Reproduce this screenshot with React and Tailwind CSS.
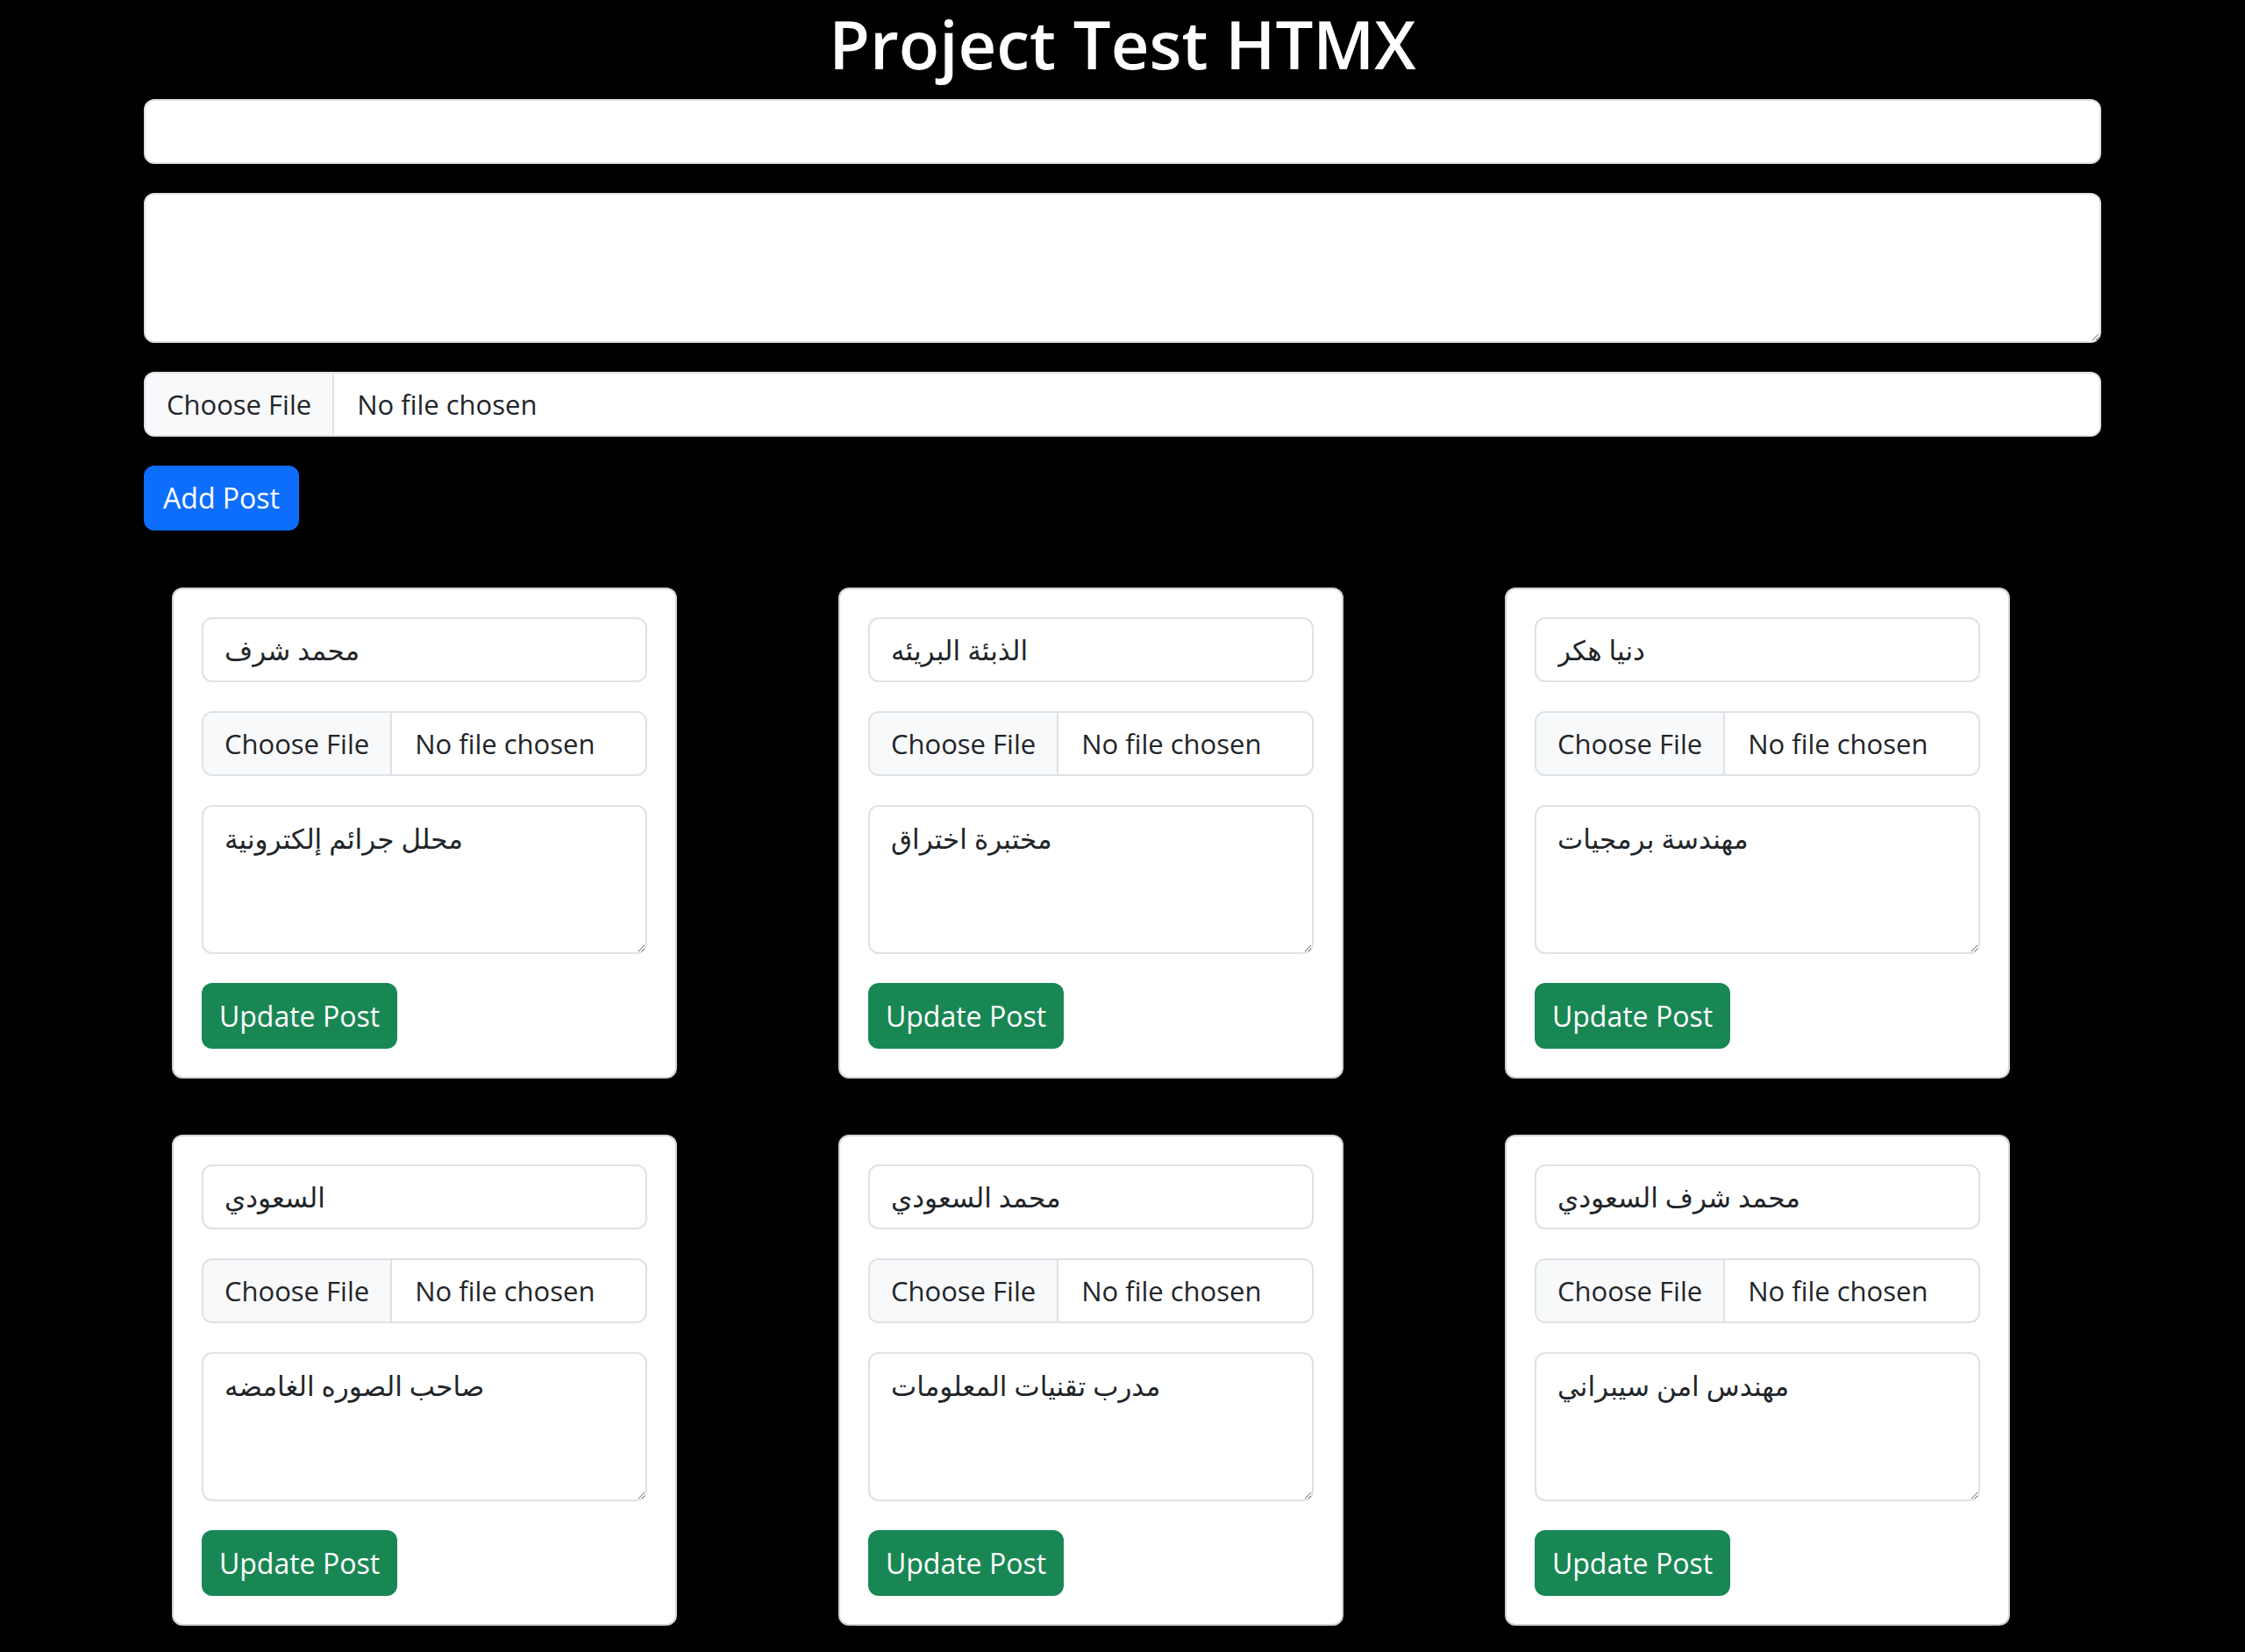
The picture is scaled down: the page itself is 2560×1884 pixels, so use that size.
import React from "react";

const posts = [
  { name: "محمد شرف", desc: "محلل جرائم إلكترونية" },
  { name: "الذبئة البريئه", desc: "مختبرة اختراق" },
  { name: "دنيا هكر", desc: "مهندسة برمجيات" },
  { name: "السعودي", desc: "صاحب الصوره الغامضه" },
  { name: "محمد السعودي", desc: "مدرب تقنيات المعلومات" },
  { name: "محمد شرف السعودي", desc: "مهندس امن سيبراني" },
];

function FileInput() {
  return (
    <div className="flex h-[74px] w-full items-stretch overflow-hidden rounded-[12px] border-2 border-[#dee2e6] bg-white text-[31px] text-[#212529]">
      <div className="flex items-center border-r-2 border-[#dee2e6] bg-[#f8f9fa] px-[24px]">
        Choose File
      </div>
      <div className="flex items-center pl-[26px]">No file chosen</div>
    </div>
  );
}

function Card({ name, desc }) {
  return (
    <div className="px-[24px]">
      <div className="m-[32px] flex w-[576px] flex-col gap-[33px] rounded-[12px] border-2 border-[#d2d2d2] bg-white p-[32px]">
        <input
          readOnly
          defaultValue={name}
          className="h-[74px] w-full rounded-[12px] border-2 border-[#dee2e6] bg-white px-[24px] text-[31px] text-[#212529] outline-none"
        />
        <FileInput />
        <textarea
          readOnly
          defaultValue={desc}
          className="block h-[170px] w-full resize-y rounded-[12px] border-2 border-[#dee2e6] bg-white px-[24px] py-[12px] text-[31px] leading-[48px] text-[#212529] outline-none"
        />
        <div>
          <button className="h-[75px] w-[223px] rounded-[12px] bg-[#198754] text-[32px] text-white">
            Update Post
          </button>
        </div>
      </div>
    </div>
  );
}

export default function App() {
  return (
    <div className="min-h-screen bg-black font-['Open_Sans','DejaVu_Sans',sans-serif]">
      <div className="mx-auto w-[2232px]">
        <h1 className="mb-[13px] text-center text-[76px] font-semibold leading-[100px] text-white">
          Project Test HTMX
        </h1>
        <div className="flex flex-col gap-[33px]">
          <input
            readOnly
            className="h-[74px] w-full rounded-[12px] border-2 border-[#dee2e6] bg-white px-[24px] text-[31px] text-[#212529] outline-none"
          />
          <textarea
            readOnly
            className="block h-[171px] w-full resize-y rounded-[12px] border-2 border-[#dee2e6] bg-white px-[24px] py-[12px] text-[31px] leading-[48px] text-[#212529] outline-none"
          />
          <FileInput />
          <div className="mb-[33px]">
            <button className="h-[74px] w-[177px] rounded-[12px] bg-[#0d6efd] text-[32px] text-white">
              Add Post
            </button>
          </div>
        </div>
        <div className="-mx-[24px] grid grid-cols-3">
          {posts.map((p, i) => (
            <Card key={i} name={p.name} desc={p.desc} />
          ))}
        </div>
      </div>
    </div>
  );
}
